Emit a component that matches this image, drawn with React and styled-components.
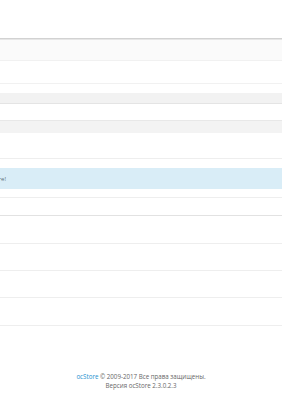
import * as React from "react"
import styled, { createGlobalStyle } from "styled-components"

const GlobalStyle = createGlobalStyle`
  html, body {
    margin: 0;
    padding: 0;
    background: #fff;
  }
  body {
    width: 282px;
    height: 420px;
    overflow: hidden;
    font-family: "Open Sans", "Liberation Sans", sans-serif;
  }
`

const Page = styled.div`
  display: flex;
  flex-direction: column;
  width: 282px;
  height: 420px;
  overflow: hidden;
`

const Header = styled.div`
  height: 38px;
  border-bottom: 1px solid #d2d2d2;
  box-shadow: 0 1px 0 #e6e6e6;
`

const Band = styled.div`
  height: ${props => props.$h}px;
  margin-top: ${props => props.$mt || 0}px;
  background: ${props => props.$bg || "#fff"};
  border-bottom: ${props => props.$bottom ? `1px solid ${props.$bottom}` : "none"};
`

const Alert = styled.div`
  display: flex;
  align-items: center;
  height: 21px;
  margin-top: 9px;
  background: #d9edf7;
  color: #5a6f7a;
  font-size: 6px;
  white-space: nowrap;
  overflow: hidden;
`

/* the alert text runs off the left edge: only its end is visible */
const AlertText = styled.span`
  display: inline-block;
  flex: none;
  width: 120px;
  margin-left: -114px;
  text-align: right;
`

const Row = styled.div`
  height: ${props => props.$h}px;
  border-bottom: 1px solid ${props => props.$line || "#eeeeee"};
`

const Footer = styled.footer`
  margin-top: 46px;
  text-align: center;
  font-size: 6.2px;
  line-height: 9px;
  color: #666;
`

const Link = styled.a`
  color: #1e91cf;
  text-decoration: none;
`

export default function App() {
  return (
    <>
      <GlobalStyle />
      <Page>
        <Header />
        <Band $h={20} $mt={1} $bg="#fafafa" $bottom="#f1f1f1" />
        <Band $h={22} $bottom="#f1f1f1" />
        <Band $h={10} $mt={9} $bg="#f2f2f2" $bottom="#e4e4e4" />
        <Band $h={15} $mt={1} $bottom="#e8e8e8" />
        <Band $h={12} $bg="#f3f3f3" />
        <Row $h={25} />
        <Alert>
          <AlertText>Добро пожаловать в ocStore!</AlertText>
        </Alert>
        <Row $h={8} />
        <Row $h={17} $line="#e2e2e2" />
        <Row $h={27} />
        <Row $h={26} />
        <Row $h={26} />
        <Row $h={27} />
        <Footer>
          <Link href="#">ocStore</Link> © 2009-2017 Все права защищены.
          <br />
          Версия ocStore 2.3.0.2.3
        </Footer>
      </Page>
    </>
  )
}
